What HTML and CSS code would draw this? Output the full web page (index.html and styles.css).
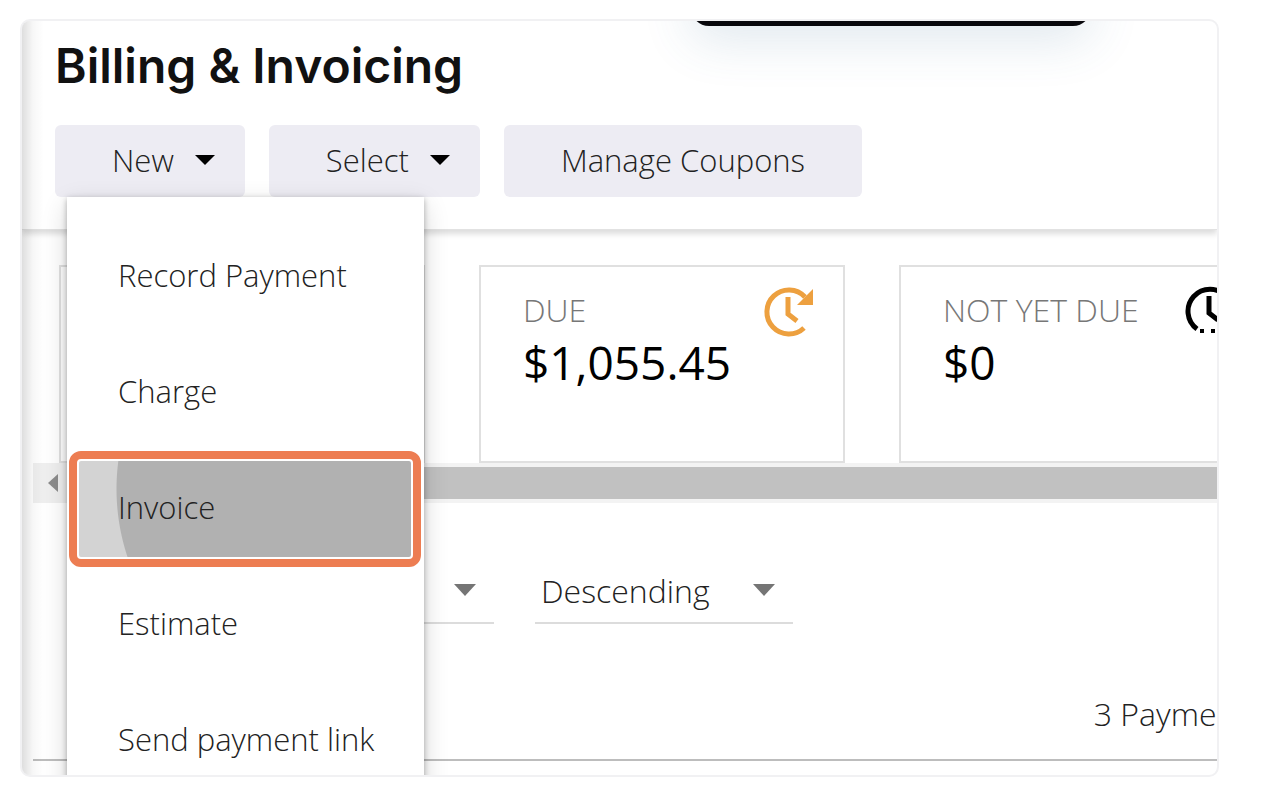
FILE: index.html
```html
<!DOCTYPE html>
<html lang="en">

<head>
    <meta charset="utf-8">
    <title>Billing &amp; Invoicing</title>
    <link rel="stylesheet" href="styles.css">
</head>

<body>

    <main class="frame">
        <div class="toast"></div>

        <header class="header">
            <h1>Billing &amp; Invoicing</h1>
            <div class="toolbar">
                <div class="dropdown">
                    <button type="button" class="btn btn_arrow" aria-expanded="true">New
                        <svg width="20" height="10" viewBox="0 0 20 10"><path d="M0 0h20L10 10z" /></svg>
                    </button>
                    <div class="menu">
                        <button type="button" class="menu_item">Record Payment</button>
                        <button type="button" class="menu_item">Charge</button>
                        <button type="button" class="menu_item active">Invoice</button>
                        <button type="button" class="menu_item">Estimate</button>
                        <button type="button" class="menu_item">Send payment link</button>
                    </div>
                </div>
                <button type="button" class="btn btn_arrow">Select
                    <svg width="20" height="10" viewBox="0 0 20 10"><path d="M0 0h20L10 10z" /></svg>
                </button>
                <button type="button" class="btn">Manage Coupons</button>
            </div>
        </header>

        <div class="content">
            <section class="cards">
                <div class="card"></div>
                <div class="card">
                    <div>
                        <p class="card_label">DUE</p>
                        <p class="card_value">$1,055.45</p>
                    </div>
                    <svg class="clock orange" width="52" height="52" viewBox="0 0 52 52">
                        <path d="M42 11A22 22 0 1 0 41 42" fill="none" stroke="currentColor" stroke-width="5" />
                        <path d="M25 11v17l9 7" fill="none" stroke="currentColor" stroke-width="5" />
                        <path d="M50 3v16H34l6-6z" fill="currentColor" />
                    </svg>
                </div>
                <div class="card">
                    <div>
                        <p class="card_label">NOT YET DUE</p>
                        <p class="card_value">$0</p>
                    </div>
                    <svg class="clock" width="52" height="52" viewBox="0 0 52 52">
                        <path d="M14 43A22 22 0 1 1 40 43" fill="none" stroke="currentColor" stroke-width="5" />
                        <path d="M26 10v17l9 7" fill="none" stroke="currentColor" stroke-width="5" />
                        <path d="M17 45h4M28 45h4M38 45h4" stroke="currentColor" stroke-width="4" />
                    </svg>
                </div>
            </section>

            <div class="scrollbar">
                <button type="button" class="scroll_btn" aria-label="Scroll left">
                    <svg width="10" height="18" viewBox="0 0 10 18"><path d="M10 0v18L0 9z" /></svg>
                </button>
                <div class="scroll_thumb"></div>
            </div>

            <div class="filters">
                <div class="filter">
                    <select aria-label="Sort by">
                        <option>Date</option>
                    </select>
                    <svg width="22" height="12" viewBox="0 0 22 12"><path d="M0 0h22L11 12z" /></svg>
                </div>
                <div class="filter">
                    <select aria-label="Sort order">
                        <option>Descending</option>
                        <option>Ascending</option>
                    </select>
                    <svg width="22" height="12" viewBox="0 0 22 12"><path d="M0 0h22L11 12z" /></svg>
                </div>
            </div>

            <p class="summary">3 Payments</p>
        </div>
    </main>

</body>

</html>
```

FILE: styles.css
```css
* {
    box-sizing: border-box;
}

body {
    margin: 0;
    padding: 19px 49px 17px 20px;
    background-color: white;
    font-family: "Open Sans", "Noto Sans", sans-serif;
    font-size: 32px;
    font-weight: 300;
    color: #222;
}

h1,
p {
    margin: 0;
}

button,
select {
    font: inherit;
    color: inherit;
    border: none;
    cursor: pointer;
}

.frame {
    position: relative;
    height: calc(100vh - 36px);
    overflow: hidden;
    border: 2px solid #f1f1f3;
    border-radius: 10px;
}

/* shade of the side panel on the left edge */
.frame::before {
    content: "";
    position: absolute;
    top: 0;
    bottom: 0;
    left: 0;
    width: 22px;
    background: linear-gradient(to right, rgba(0, 0, 0, 0.13), rgba(0, 0, 0, 0.03) 50%, transparent);
    z-index: 1;
}

.toast {
    position: absolute;
    top: -60px;
    left: 56%;
    width: 400px;
    height: 65px;
    border-radius: 18px;
    background-color: #08080c;
    box-shadow: 0 14px 50px rgba(60, 110, 150, 0.16);
}

.header {
    padding: 16px 33px 32px;
    border-bottom: 1px solid #e2e2e2;
    box-shadow: 0 4px 6px rgba(0, 0, 0, 0.14);
}

.header h1 {
    font-family: Inter, sans-serif;
    font-size: 48px;
    font-weight: 600;
    line-height: 58px;
    color: #111;
}

.toolbar {
    display: flex;
    gap: 24px;
    margin-top: 30px;
}

.dropdown {
    position: relative;
}

.btn {
    display: flex;
    align-items: center;
    gap: 21px;
    height: 72px;
    padding: 0 57px 2px;
    border-radius: 6px;
    background-color: #edecf3;
    font-size: 31px;
}

.btn_arrow {
    padding-right: 30px;
}

.menu {
    position: absolute;
    top: 100%;
    left: 12px;
    z-index: 2;
    display: flex;
    flex-direction: column;
    gap: 20px;
    width: 357px;
    padding: 32px 13px 32px 12px;
    background-color: white;
    box-shadow: 0 8px 24px rgba(0, 0, 0, 0.16), 0 2px 6px rgba(0, 0, 0, 0.3);
}

.menu_item {
    height: 96px;
    padding: 0 39px 4px;
    background-color: white;
    font-size: 31px;
    text-align: left;
    white-space: nowrap;
}

.menu_item.active {
    border-radius: 2px;
    background: radial-gradient(circle at 253px 28px, #b1b1b1 215px, #d3d3d3 216px);
    outline: 8px solid #ed7d52;
    outline-offset: 2px;
}

.content {
    width: calc(100% + 80px);
    padding-top: 35px;
}

.cards {
    display: flex;
    gap: 54px;
    padding-left: 37px;
}

.card {
    display: flex;
    justify-content: space-between;
    flex: none;
    width: 366px;
    height: 198px;
    padding: 19px 28px 20px 42px;
    border: 2px solid #e0e0e0;
}

.card_label {
    line-height: 48px;
    color: #777;
}

.card_value {
    font-size: 46px;
    font-weight: 400;
    line-height: 56px;
    color: black;
}

.clock {
    color: black;
}

.clock.orange {
    color: #eda03f;
}

.scrollbar {
    display: flex;
    align-items: center;
    height: 40px;
    margin-left: 11px;
    background-color: #f3f3f3;
}

.scroll_btn {
    width: 40px;
    height: 40px;
    padding: 0;
    background-color: #efefef;
    line-height: 0;
}

.scroll_btn svg {
    fill: #8c8c8c;
}

.scroll_thumb {
    flex: 1;
    height: 32px;
    background-color: #c1c1c1;
}

.filters {
    display: flex;
    gap: 41px;
    margin-top: 57px;
    padding-left: 214px;
}

.filter {
    display: flex;
    align-items: center;
    width: 258px;
    height: 64px;
    padding: 0 18px 2px 0;
    border-bottom: 2px solid #dcdcdc;
}

.filter select {
    flex: 1;
    appearance: none;
    padding: 0 6px;
    background-color: transparent;
}

.filter svg {
    fill: #757575;
}

.summary {
    margin-left: 11px;
    padding: 68px 36px 23px 0;
    border-bottom: 2px solid #bdbdbd;
    line-height: 44px;
    text-align: right;
}
```
